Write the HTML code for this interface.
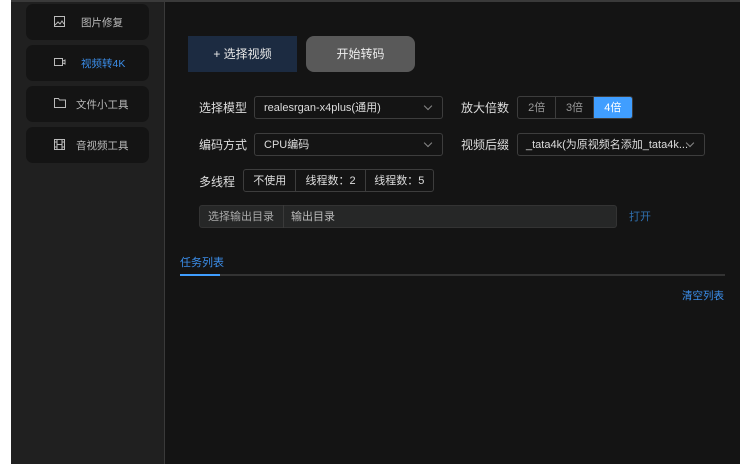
<!DOCTYPE html>
<html><head><meta charset="utf-8"><style>
*{box-sizing:border-box;margin:0;padding:0}
body{width:751px;height:464px;background:#fff;font-family:"Liberation Sans","Noto Sans CJK SC",sans-serif;font-size:11px;color:#ddd;position:relative;overflow:hidden}
.side{position:absolute;left:11px;top:0;width:153px;height:464px;background:#202020;border-top:2px solid #3a3a3a}
.main{position:absolute;left:164px;top:0;width:576px;height:464px;background:#141414;border-left:1px solid #3a3a3a;border-top:2px solid #3a3a3a}
.item{position:absolute;left:15px;width:123px;height:36px;background:#141414;border-radius:7px;color:#bbb;font-size:10.5px;display:flex;align-items:center}
.item svg{position:absolute;left:28px;top:12px}
.item span{position:absolute;left:55px}
.abs{position:absolute}
.lbl{position:absolute;font-size:12px;color:#ddd}
.sel{position:absolute;border:1px solid #3d3d3d;border-radius:3px;height:23px;font-size:11px;color:#ddd;padding-left:9px;padding-right:26px;line-height:23px;white-space:nowrap;overflow:hidden}
.sel:after{content:"";position:absolute;right:11px;top:6px;width:5px;height:5px;border-right:1px solid #888;border-bottom:1px solid #888;transform:rotate(45deg)}
.seg{position:absolute;display:flex;height:23px;border:1px solid #3d3d3d;border-radius:3px;overflow:hidden}
.seg div{border-right:1px solid #3d3d3d;text-align:center;line-height:23px;font-size:11px;color:#ddd}
.seg div:last-child{border-right:none}
</style></head><body>
<div class="side">
 <div class="item" style="top:2px"><svg width="11" height="11" viewBox="0 0 11 11" fill="none" stroke="#bbb"><rect x=".5" y=".5" width="10" height="10"/><path d="M1 9l3-3 2 2 2-3 2 3"/></svg><span>图片修复</span></div>
 <div class="item" style="top:43px;color:#3b8eea"><svg width="12" height="10" viewBox="0 0 12 10" fill="none" stroke="#bbb"><rect x=".5" y="1.5" width="8" height="7"/><path d="M9 4l2-1v4l-2-1"/></svg><span>视频转4K</span></div>
 <div class="item" style="top:84px"><svg width="12" height="10" viewBox="0 0 12 10" fill="none" stroke="#bbb"><path d="M.5 .5h4l1 1.5h6v7.5H.5z"/></svg><span style="left:50px">文件小工具</span></div>
 <div class="item" style="top:125px"><svg width="11" height="11" viewBox="0 0 11 11" fill="none" stroke="#bbb"><rect x=".5" y=".5" width="10" height="10"/><path d="M3 0v11M8 0v11M3 5.5h5M0 3h3M0 8h3M8 3h3M8 8h3"/></svg><span style="left:50px">音视频工具</span></div>
</div>
<div class="main"></div>
<div class="abs" style="left:188px;top:36px;width:109px;height:36px;background:#1c2b41;color:#e8e8e8;font-size:12px;text-align:center;line-height:36px">+ 选择视频</div>
<div class="abs" style="left:306px;top:36px;width:109px;height:36px;background:#595959;border-radius:8px;color:#eee;font-size:12px;text-align:center;line-height:36px">开始转码</div>

<div class="lbl" style="left:199px;top:99px">选择模型</div>
<div class="sel" style="left:254px;top:96px;width:189px">realesrgan-x4plus(通用)</div>
<div class="lbl" style="left:461px;top:99px">放大倍数</div>
<div class="seg" style="left:517px;top:96px;width:116px"><div style="width:39px;color:#999">2倍</div><div style="width:38px;color:#999">3倍</div><div style="width:39px;background:#409eff;color:#fff">4倍</div></div>

<div class="lbl" style="left:199px;top:136px">编码方式</div>
<div class="sel" style="left:254px;top:133px;width:189px">CPU编码</div>
<div class="lbl" style="left:461px;top:136px">视频后缀</div>
<div class="sel" style="left:517px;top:133px;width:188px;padding-left:8px">_tata4k(为原视频名添加_tata4k...</div>

<div class="lbl" style="left:199px;top:173px">多线程</div>
<div class="seg" style="left:243px;top:169px;width:191px"><div style="width:53px">不使用</div><div style="width:70px">线程数：2</div><div style="width:68px">线程数：5</div></div>

<div class="abs" style="left:199px;top:205px;width:418px;height:23px;background:#262727;border:1px solid #333;border-radius:3px"></div>
<div class="abs" style="left:199px;top:205px;width:85px;height:23px;border-right:1px solid #3a3a3a;color:#aaa;font-size:11px;text-align:center;line-height:24px">选择输出目录</div>
<div class="abs" style="left:291px;top:205px;color:#bbb;font-size:11px;line-height:24px">输出目录</div>
<div class="abs" style="left:629px;top:205px;color:#2f6fae;font-size:11px;line-height:24px">打开</div>

<div class="abs" style="left:180px;top:254px;color:#3b8eea;font-size:11px">任务列表</div>
<div class="abs" style="left:180px;top:274px;width:545px;height:2px;background:#333"></div>
<div class="abs" style="left:180px;top:274px;width:40px;height:2px;background:#409eff"></div>
<div class="abs" style="left:682px;top:288px;color:#3b8eea;font-size:10.5px">清空列表</div>
</body></html>
